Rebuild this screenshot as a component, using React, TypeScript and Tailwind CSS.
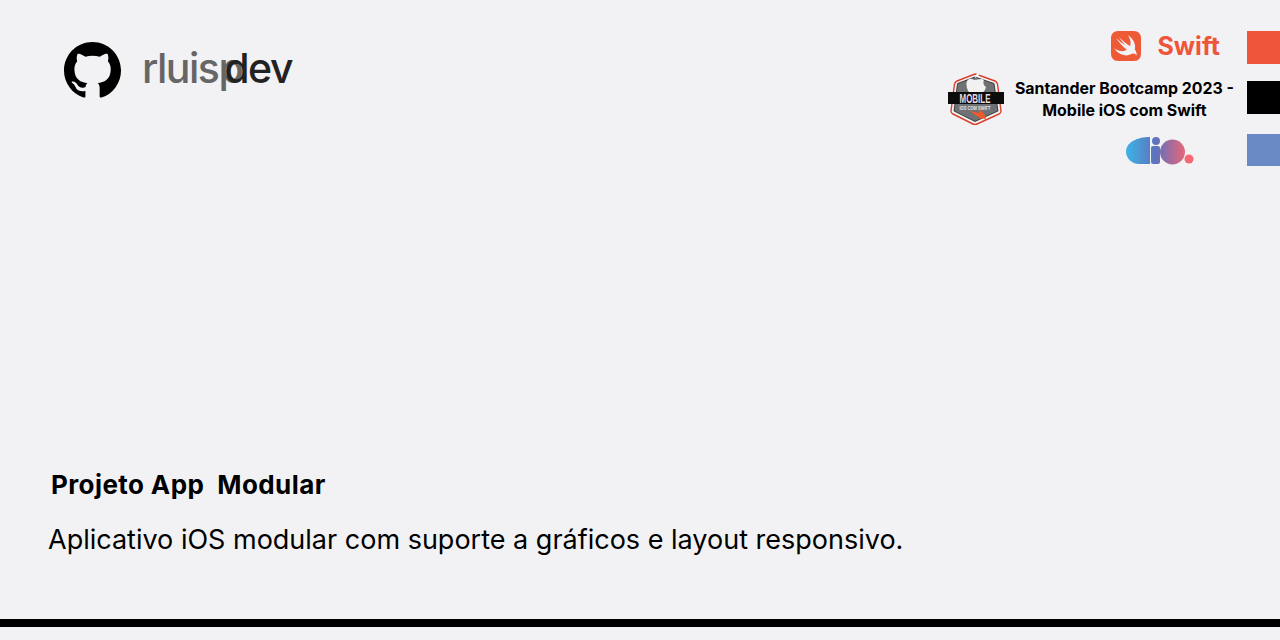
import React from 'react';
import { SiSwift } from 'react-icons/si';

const GithubMark: React.FC = () => (
  <svg viewBox="0 0 16 16" className="w-[57px] h-[57px] text-black" fill="currentColor">
    <path d="M8 0C3.58 0 0 3.58 0 8c0 3.54 2.29 6.53 5.47 7.59.4.07.55-.17.55-.38 0-.19-.01-.82-.01-1.49-2.01.37-2.53-.49-2.69-.94-.09-.23-.48-.94-.82-1.13-.28-.15-.68-.52-.01-.53.63-.01 1.08.58 1.23.82.72 1.21 1.87.87 2.33.66.07-.52.28-.87.51-1.07-1.78-.2-3.64-.89-3.64-3.95 0-.87.31-1.59.82-2.15-.08-.2-.36-1.02.08-2.12 0 0 .67-.21 2.2.82.64-.18 1.32-.27 2-.27s1.36.09 2 .27c1.53-1.04 2.2-.82 2.2-.82.44 1.1.16 1.92.08 2.12.51.56.82 1.27.82 2.15 0 3.07-1.87 3.75-3.65 3.95.29.25.54.73.54 1.48 0 1.07-.01 1.93-.01 2.2 0 .21.15.46.55.38A8.01 8.01 0 0 0 16 8c0-4.42-3.58-8-8-8z" />
  </svg>
);

const MobileBadge: React.FC = () => (
  <svg viewBox="0 0 56 54" className="w-[56px] h-[54px]">
    <path d="M27 3 Q28 3 29 3.5 L47 10 Q49 11 49.5 13 L53 40 Q53 42 51 43 L29 53 Q27 54 25 53 L5 43 Q3 42 3 40 L6.5 13 Q7 11 9 10 Z" fill="#f4f4f4" stroke="#d8402c" strokeWidth="1.4" strokeLinejoin="round" />
    <path d="M27 6 L46 12.5 L50 40 L27 50.5 L6 40 L9.5 12.5 Z" fill="#6f7274" stroke="#222" strokeWidth="0.8" strokeLinejoin="round" />
    <path d="M26 9 C22 6 18 9 18.5 14 C19 19 21 24 28 24 C34 24 37 20 38 16 C35 14 35 10 36 9 C33 7 30 9 26 9 Z" fill="#f1f1f1" />
    <path d="M27 7 C27 4 29 2 32 1 C32 4 30 6 27 7 Z" fill="#eeeeee" />
    <rect x="0" y="21" width="56" height="12" fill="#0c0c0c" />
    <text x="27" y="32" textAnchor="middle" fontFamily="'Liberation Sans', sans-serif" fontWeight="700" fontSize="12" fill="#e9dcdc" textLength="31" lengthAdjust="spacingAndGlyphs">MOBILE</text>
    <text x="27" y="38.5" textAnchor="middle" fontFamily="'Liberation Sans', sans-serif" fontWeight="700" fontSize="5" fill="#e4e4e4" textLength="31" lengthAdjust="spacingAndGlyphs">IOS COM SWIFT</text>
    <path d="M21 40 C25 42 29 45 33 48 C35 47 37 48 38 49 C38 45 36 42 32 39 C32 41 31 42 30 42 C27 41 24 40 21 40 Z" fill="#ee5a2a" />
  </svg>
);

const DioLogo: React.FC = () => (
  <svg viewBox="0 0 68 28" className="w-[68px] h-[28px]">
    <defs>
      <linearGradient id="dioGrad" gradientUnits="userSpaceOnUse" x1="0" x2="60" y1="0" y2="0">
        <stop offset="0" stopColor="#3cb4e6" />
        <stop offset="0.5" stopColor="#5f71bd" />
        <stop offset="1" stopColor="#ee6577" />
      </linearGradient>
    </defs>
    <path d="M24 0 V27 H13 C5.5 27 0 21 0 14.5 C0 6 10 0 24 0 Z" fill="url(#dioGrad)" />
    <circle cx="30" cy="4" r="4" fill="url(#dioGrad)" />
    <rect x="25" y="9" width="9" height="18" rx="2" fill="url(#dioGrad)" />
    <circle cx="46.5" cy="15" r="12.5" fill="url(#dioGrad)" />
    <circle cx="63" cy="22" r="4.5" fill="#f36a74" />
  </svg>
);

export default function App() {
  return (
    <div className="h-[640px] w-[1280px] overflow-hidden bg-[#f2f2f4] flex flex-col font-['Inter',sans-serif]">
      <header className="flex justify-between items-start">
        <div className="flex items-start gap-[21px] ml-[64px] mt-[42px]">
          <GithubMark />
          <h1 className="font-medium text-[41px] leading-[52px] tracking-[-1.5px] text-[#666666] whitespace-pre">
            rluisp<span className="text-[#222222] ml-[-18px]">dev</span>
          </h1>
        </div>

        <div className="flex mt-[30px]">
          <div className="flex flex-col items-end">
            <div className="flex items-center h-[32px] gap-[16px] mr-[27px]">
              <SiSwift className="w-[30px] h-[30px] text-[#ee5a36]" />
              <span className="mt-[2px] text-[25px] font-bold text-[#ee5539]">Swift</span>
            </div>
            <div className="flex items-center gap-[11px] mt-[9px] mr-[13px]">
              <MobileBadge />
              <p className="mt-[4px] text-[15.9px] leading-[22px] font-bold text-black text-center whitespace-nowrap">
                Santander Bootcamp 2023 -<br />Mobile iOS com Swift
              </p>
            </div>
            <div className="mr-[53px] mt-[12px]">
              <DioLogo />
            </div>
          </div>
          <div className="flex flex-col">
            <div className="w-[33px] h-[33px] mt-[1px] bg-[#ee553a]" />
            <div className="w-[33px] h-[33px] mt-[17px] bg-black" />
            <div className="w-[33px] h-[32px] mt-[20px] bg-[#6a8ac5]" />
          </div>
        </div>
      </header>

      <div className="mt-auto">
        <h2 className="ml-[51px] text-[26px] leading-[38px] tracking-[0.4px] font-bold text-black whitespace-pre">Projeto App  Modular</h2>
        <p className="ml-[48px] mt-[17px] text-[27px] leading-[38px] text-black">
          Aplicativo iOS modular com suporte a gráficos e layout responsivo.
        </p>
      </div>
      <div className="mt-[60px] mb-[13px] h-[8px] bg-black" />
    </div>
  );
}
